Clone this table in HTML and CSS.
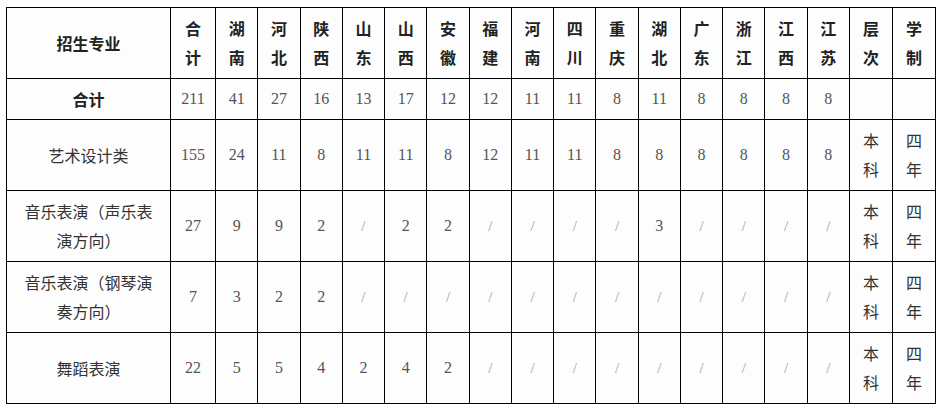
FILE: index.html
```html
<!DOCTYPE html>
<html lang="zh">
<head>
<meta charset="utf-8">
<link rel="stylesheet" href="styles.css">
</head>
<body>
<table class="quota">
  <colgroup>
    <col class="c-major">
    <col class="c-total">
    <col span="15">
    <col class="c-meta">
    <col class="c-meta">
  </colgroup>
  <tr class="r-head">
    <th>招生专业</th>
    <th>合<br>计</th>
    <th>湖<br>南</th>
    <th>河<br>北</th>
    <th>陕<br>西</th>
    <th>山<br>东</th>
    <th>山<br>西</th>
    <th>安<br>徽</th>
    <th>福<br>建</th>
    <th>河<br>南</th>
    <th>四<br>川</th>
    <th>重<br>庆</th>
    <th>湖<br>北</th>
    <th>广<br>东</th>
    <th>浙<br>江</th>
    <th>江<br>西</th>
    <th>江<br>苏</th>
    <th>层<br>次</th>
    <th>学<br>制</th>
  </tr>
  <tr class="r-sum">
    <th>合计</th>
    <td class="n">211</td><td class="n">41</td><td class="n">27</td><td class="n">16</td><td class="n">13</td><td class="n">17</td><td class="n">12</td><td class="n">12</td><td class="n">11</td><td class="n">11</td><td class="n">8</td><td class="n">11</td><td class="n">8</td><td class="n">8</td><td class="n">8</td><td class="n">8</td>
    <td></td><td></td>
  </tr>
  <tr class="r-row">
    <td class="t">艺术设计类</td>
    <td class="n">155</td><td class="n">24</td><td class="n">11</td><td class="n">8</td><td class="n">11</td><td class="n">11</td><td class="n">8</td><td class="n">12</td><td class="n">11</td><td class="n">11</td><td class="n">8</td><td class="n">8</td><td class="n">8</td><td class="n">8</td><td class="n">8</td><td class="n">8</td>
    <td class="t">本<br>科</td><td class="t">四<br>年</td>
  </tr>
  <tr class="r-row">
    <td class="t">音乐表演（声乐表<br>演方向）</td>
    <td class="n">27</td><td class="n">9</td><td class="n">9</td><td class="n">2</td><td class="s">/</td><td class="n">2</td><td class="n">2</td><td class="s">/</td><td class="s">/</td><td class="s">/</td><td class="s">/</td><td class="n">3</td><td class="s">/</td><td class="s">/</td><td class="s">/</td><td class="s">/</td>
    <td class="t">本<br>科</td><td class="t">四<br>年</td>
  </tr>
  <tr class="r-row">
    <td class="t">音乐表演（钢琴演<br>奏方向）</td>
    <td class="n">7</td><td class="n">3</td><td class="n">2</td><td class="n">2</td><td class="s">/</td><td class="s">/</td><td class="s">/</td><td class="s">/</td><td class="s">/</td><td class="s">/</td><td class="s">/</td><td class="s">/</td><td class="s">/</td><td class="s">/</td><td class="s">/</td><td class="s">/</td>
    <td class="t">本<br>科</td><td class="t">四<br>年</td>
  </tr>
  <tr class="r-row">
    <td class="t">舞蹈表演</td>
    <td class="n">22</td><td class="n">5</td><td class="n">5</td><td class="n">4</td><td class="n">2</td><td class="n">4</td><td class="n">2</td><td class="s">/</td><td class="s">/</td><td class="s">/</td><td class="s">/</td><td class="s">/</td><td class="s">/</td><td class="s">/</td><td class="s">/</td><td class="s">/</td>
    <td class="t">本<br>科</td><td class="t">四<br>年</td>
  </tr>
</table>
</body>
</html>
```

FILE: styles.css
```css
html, body {
  margin: 0;
  padding: 0;
  background: #ffffff;
}

.quota {
  margin: 7px 0 0 6px;
  width: 930px;
  table-layout: fixed;
  border-collapse: collapse;
  background: #fdfdfd;
  font-family: "Noto Sans CJK SC", "Liberation Serif", serif;
  color: #333333;
}

.c-major { width: 164px; }
.c-total { width: 45px; }
.c-meta { width: 43px; }

.quota th,
.quota td {
  border: 1px solid #000000;
  padding: 0;
  text-align: center;
  vertical-align: middle;
}

.quota th {
  font-size: 16px;
  font-weight: 700;
  line-height: 29px;
  color: #222222;
}

.r-head { height: 71px; }
.r-sum { height: 41px; }
.r-row { height: 71px; }

.quota td.t {
  font-size: 16px;
  line-height: 29px;
  font-weight: 400;
  color: #333333;
}

.quota td.n {
  font-family: "Liberation Serif", serif;
  font-size: 16px;
  color: #555555;
}

.quota td.s {
  font-family: "Liberation Serif", serif;
  font-size: 15px;
  color: #a0a0a0;
}
```
